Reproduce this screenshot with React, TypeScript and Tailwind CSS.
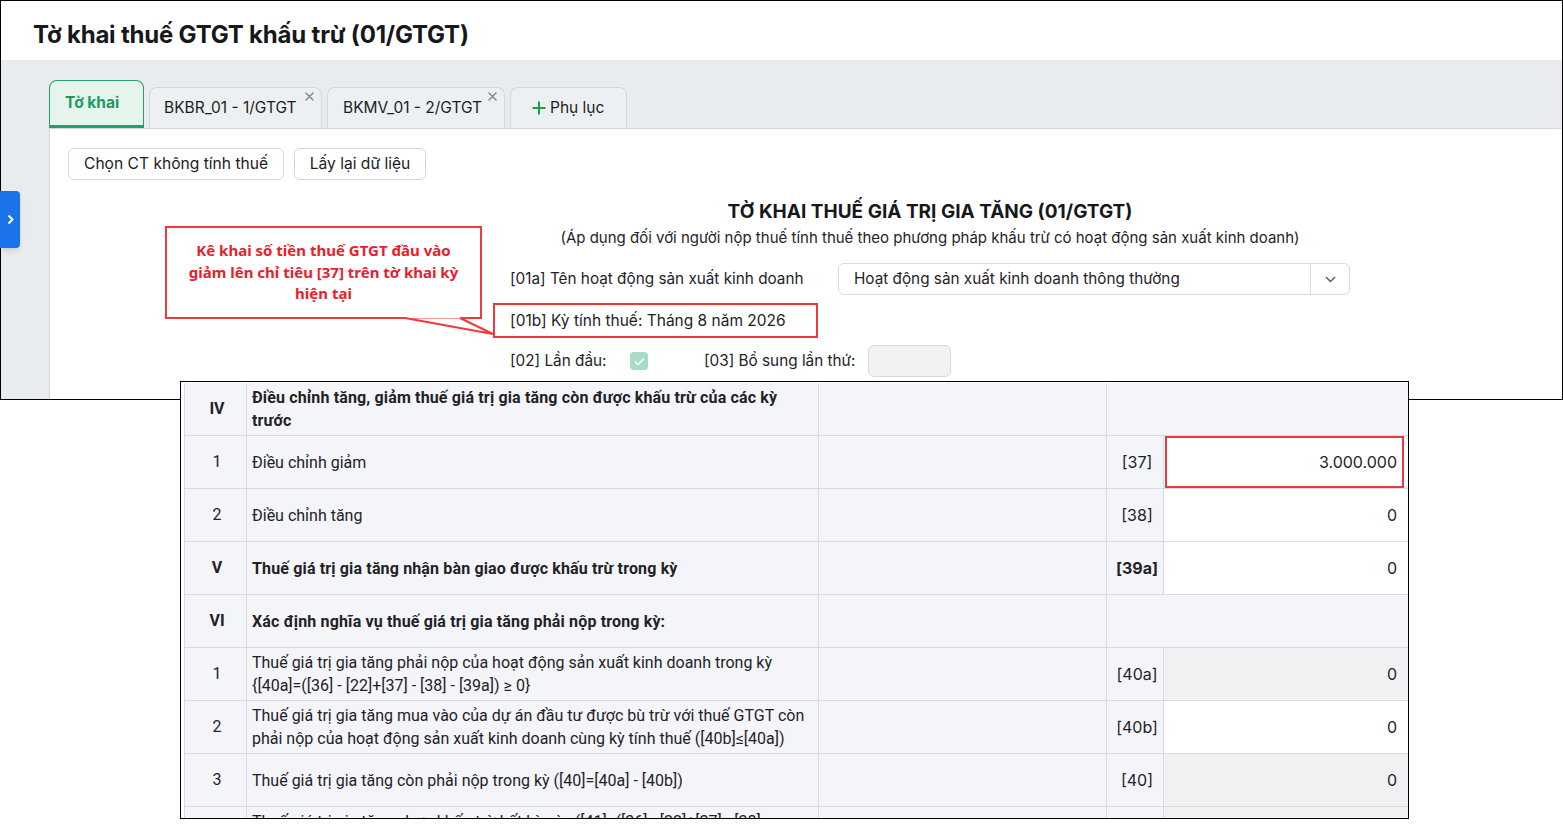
import React from 'react';

type Row = {
  no: string;
  lines: string[];
  bold?: boolean;
  section?: boolean;
  code?: string;
  value?: string;
  readonly?: boolean;
  highlight?: boolean;
};

const ROWS: Row[] = [
  { no: 'IV', lines: ['Điều chỉnh tăng, giảm thuế giá trị gia tăng còn được khấu trừ của các kỳ', 'trước'], bold: true, section: true },
  { no: '1', lines: ['Điều chỉnh giảm'], code: '[37]', value: '3.000.000', highlight: true },
  { no: '2', lines: ['Điều chỉnh tăng'], code: '[38]', value: '0' },
  { no: 'V', lines: ['Thuế giá trị gia tăng nhận bàn giao được khấu trừ trong kỳ'], bold: true, code: '[39a]', value: '0' },
  { no: 'VI', lines: ['Xác định nghĩa vụ thuế giá trị gia tăng phải nộp trong kỳ:'], bold: true, section: true },
  {
    no: '1',
    lines: ['Thuế giá trị gia tăng phải nộp của hoạt động sản xuất kinh doanh trong kỳ', '{[40a]=([36] - [22]+[37] - [38] - [39a]) ≥ 0}'],
    code: '[40a]',
    value: '0',
    readonly: true,
  },
  {
    no: '2',
    lines: ['Thuế giá trị gia tăng mua vào của dự án đầu tư được bù trừ với thuế GTGT còn', 'phải nộp của hoạt động sản xuất kinh doanh cùng kỳ tính thuế ([40b]≤[40a])'],
    code: '[40b]',
    value: '0',
  },
  { no: '3', lines: ['Thuế giá trị gia tăng còn phải nộp trong kỳ ([40]=[40a] - [40b])'], code: '[40]', value: '0', readonly: true },
  {
    no: '4',
    lines: ['Thuế giá trị gia tăng chưa khấu trừ hết kỳ này ([41]=([36] - [22]+[37] - [38]', ' - [39a]) < 0)'],
    code: '[41]',
    value: '0',
    readonly: true,
  },
];

const CloseX = () => (
  <svg className="absolute top-[4px] right-[7px]" width="9" height="9" viewBox="0 0 9 9">
    <path d="M1 1L8 8M8 1L1 8" stroke="#8a8f96" strokeWidth="1.6" strokeLinecap="round" />
  </svg>
);

const TaxTable: React.FC = () => (
  <div className="absolute left-[180px] top-[381px] w-[1229px] h-[438px] border border-black bg-white overflow-hidden pl-[3px] pt-[1px]">
    <div className="grid grid-cols-[62px_572px_288px_57px_1fr] border-l border-[#d9dbe0] text-[16px] text-[#1f2227]">
      {ROWS.map((r, i) => (
        <React.Fragment key={i}>
          <div
            className={`h-[53px] bg-[#f4f5f8] border-r border-b border-[#d9dbe0] flex items-center justify-center pl-[3px] font-['Roboto',sans-serif] ${r.bold ? 'font-bold' : ''}`}
          >
            {r.no}
          </div>
          <div
            className={`h-[53px] bg-[#f4f5f8] border-r border-b border-[#d9dbe0] flex flex-col justify-center pl-[5px] leading-[23px] whitespace-nowrap font-['Roboto',sans-serif] ${r.bold ? 'font-bold tracking-[0.15px]' : ''}`}
          >
            {r.lines.map((l, j) => (
              <span key={j}>{l}</span>
            ))}
          </div>
          <div className="h-[53px] bg-[#f4f5f8] border-r border-b border-[#d9dbe0]" />
          {r.section ? (
            <div className="col-span-2 h-[53px] bg-[#f4f5f8] border-b border-[#d9dbe0]" />
          ) : (
            <>
              <div
                className={`h-[53px] bg-[#f4f5f8] border-r border-b border-[#d9dbe0] flex items-center justify-center pl-[4px] font-['Inter',sans-serif] ${r.bold ? 'font-bold' : ''}`}
              >
                {r.code}
              </div>
              <div
                className={`h-[53px] border-b border-[#d9dbe0] font-['Inter',sans-serif] ${r.readonly ? 'bg-[#f1f1f3]' : 'bg-white'}`}
              >
                {r.highlight ? (
                  <div className="h-full ml-[1px] mr-[4px] border-2 border-[#e83a3a] flex items-center justify-end pr-[5px]">
                    {r.value}
                  </div>
                ) : (
                  <div className="h-full flex items-center justify-end pr-[11px]">{r.value}</div>
                )}
              </div>
            </>
          )}
        </React.Fragment>
      ))}
    </div>
  </div>
);

const App: React.FC = () => {
  return (
    <div className="relative w-[1563px] h-[838px] bg-white overflow-hidden font-['Inter',sans-serif] text-[#1f2227]">
      {/* top screenshot frame */}
      <div className="h-[400px] border border-black flex flex-col">
        <header className="h-[59px] bg-white flex items-center pl-[32px] pt-[8px]">
          <h1 className="text-[24px] font-bold text-[#16181b] tracking-[-0.2px]">Tờ khai thuế GTGT khấu trừ (01/GTGT)</h1>
        </header>

        <div className="flex-1 bg-[#e8ecef] flex">
          <div className="w-[48px] shrink-0" />
          <div className="flex-1 flex flex-col">
            {/* tabs */}
            <div className="flex items-end gap-[5px] pt-[20px] text-[15.5px]">
              <div className="w-[95px] h-[48px] bg-[#e6f4ee] border border-[#22a06b] border-b-[3px] rounded-t-[8px] flex items-center pl-[15px] pb-[1px] font-bold text-[#1e9a60]">
                Tờ khai
              </div>
              <div className="relative w-[173px] h-[41px] bg-[#edf0f2] border border-[#d3d7db] border-b-0 rounded-t-[8px] flex items-center pl-[14px] text-[#1b1d20]">
                BKBR_01 - 1/GTGT
                <CloseX />
              </div>
              <div className="relative w-[178px] h-[41px] bg-[#edf0f2] border border-[#d3d7db] border-b-0 rounded-t-[8px] flex items-center pl-[15px] text-[#1b1d20]">
                BKMV_01 - 2/GTGT
                <CloseX />
              </div>
              <div className="w-[117px] h-[41px] bg-[#edf0f2] border border-[#d3d7db] border-b-0 rounded-t-[8px] flex items-center pl-[21px] gap-[4px] text-[#1b1d20]">
                <svg width="14" height="14" viewBox="0 0 14 14">
                  <path d="M7 0.5V13.5M0.5 7H13.5" stroke="#1f9d3a" strokeWidth="2" />
                </svg>
                Phụ lục
              </div>
            </div>

            {/* white panel */}
            <div className="flex-1 bg-white border-l border-t border-[#d3d7db] pl-[18px] pt-[19px]">
              <div className="flex gap-[10px]">
                <button className="w-[216px] h-[32px] border border-[#d3d6da] rounded-[6px] text-[15.6px] text-[#1b1d20] bg-white">
                  Chọn CT không tính thuế
                </button>
                <button className="w-[132px] h-[32px] border border-[#d3d6da] rounded-[6px] text-[15.6px] text-[#1b1d20] bg-white">
                  Lấy lại dữ liệu
                </button>
              </div>

              <div className="ml-[425px] w-[874px] mt-[20px]">
                <h2 className="text-center text-[19px] leading-[24px] font-bold text-[#16181b]">
                  TỜ KHAI THUẾ GIÁ TRỊ GIA TĂNG (01/GTGT)
                </h2>
                <p className="text-center text-[15px] leading-[22px] mt-[3px] text-[#1f2227]">
                  (Áp dụng đối với người nộp thuế tính thuế theo phương pháp khấu trừ có hoạt động sản xuất kinh doanh)
                </p>

                <div className="flex items-center mt-[14px] text-[15.3px]">
                  <div className="w-[345px] pl-[17px]">[01a] Tên hoạt động sản xuất kinh doanh</div>
                  <div className="w-[512px] h-[32px] border border-[#d6d9dd] rounded-[6px] flex items-center">
                    <span className="flex-1 pl-[15px]">Hoạt động sản xuất kinh doanh thông thường</span>
                    <span className="w-[39px] h-full border-l border-[#d6d9dd] flex items-center justify-center">
                      <svg width="11" height="7" viewBox="0 0 11 7">
                        <path d="M1 1L5.5 5.5L10 1" stroke="#55595f" strokeWidth="1.4" fill="none" />
                      </svg>
                    </span>
                  </div>
                </div>

                <div className="mt-[8px] w-[325px] h-[35px] border-2 border-[#e83a3a] flex items-center pl-[15px] text-[15.5px]">
                  [01b] Kỳ tính thuế: Tháng 8 năm 2026
                </div>

                <div className="flex items-center mt-[7px] text-[15.3px]">
                  <div className="w-[137px] pl-[17px]">[02] Lần đầu:</div>
                  <span className="w-[18px] h-[18px] rounded-[4px] bg-[#a6dcc4] flex items-center justify-center">
                    <svg width="11" height="9" viewBox="0 0 11 9">
                      <path d="M1 4.5L4 7.5L10 1.5" stroke="#ffffff" strokeWidth="1.6" fill="none" />
                    </svg>
                  </span>
                  <div className="w-[164px] ml-[56px]">[03] Bổ sung lần thứ:</div>
                  <div className="w-[83px] h-[32px] bg-[#f1f2f4] border border-[#d6d9dd] rounded-[6px]" />
                </div>
              </div>
            </div>
          </div>
        </div>
      </div>

      {/* sidebar toggle */}
      <div className="absolute left-0 top-[191px] w-[20px] h-[57px] bg-[#1a73e8] rounded-r-[4px] flex items-center justify-center shadow-md">
        <svg width="7" height="11" viewBox="0 0 7 11">
          <path d="M1.5 1.5L5.5 5.5L1.5 9.5" stroke="#ffffff" strokeWidth="2" fill="none" />
        </svg>
      </div>

      {/* callout */}
      <div className="absolute left-[165px] top-[226px] w-[317px] h-[93px] border-2 border-[#ee3b3b] bg-white flex items-center justify-center text-center font-['Noto_Sans',sans-serif] font-bold text-[15px] leading-[21.5px] text-[#e8202a]">
        <p>
          Kê khai số tiền thuế GTGT đầu vào
          <br />
          giảm lên chỉ tiêu [37] trên tờ khai kỳ
          <br />
          hiện tại
        </p>
      </div>
      <svg className="absolute left-[400px] top-[315px]" width="96" height="22" viewBox="0 0 96 22">
        <polygon points="5,0 61,0 60,3.5 6,3.5" fill="#ffffff" />
        <polyline points="5,3 93,19 60,3" fill="none" stroke="#ee3b3b" strokeWidth="2" />
      </svg>

      <TaxTable />
    </div>
  );
};

export default App;
